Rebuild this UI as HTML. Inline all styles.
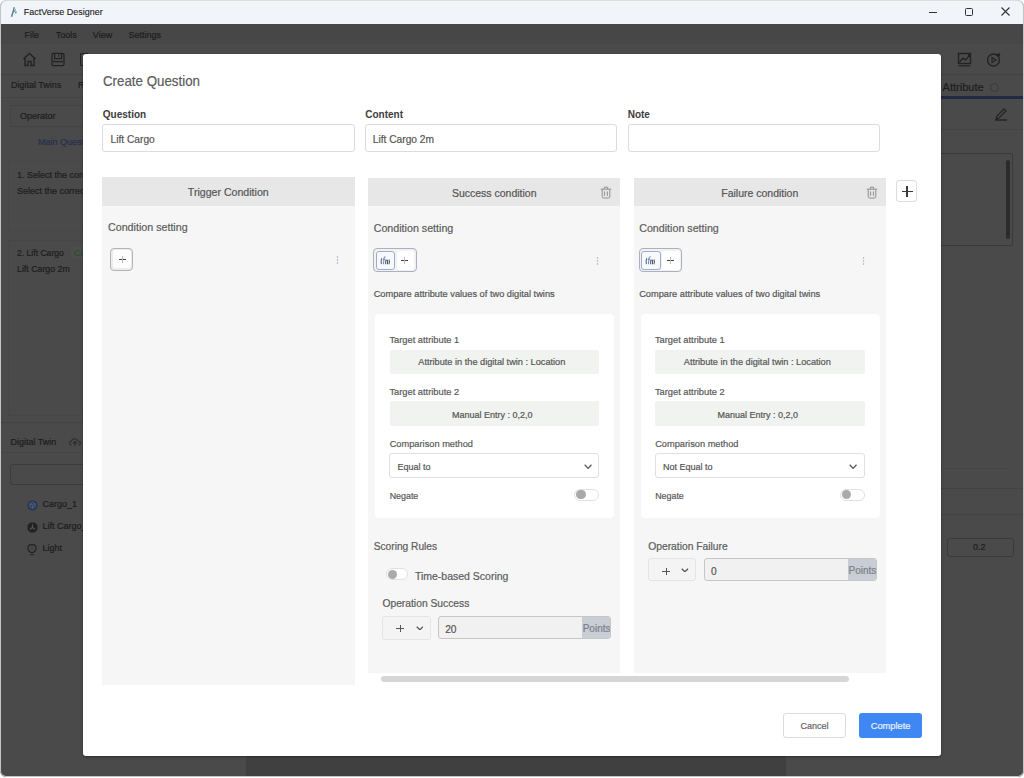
<!DOCTYPE html>
<html><head><meta charset="utf-8">
<style>
*{box-sizing:border-box;margin:0;padding:0}
html,body{width:1024px;height:778px;overflow:hidden;background:#ffffff;font-family:"Liberation Sans",sans-serif}
.a{position:absolute}
.t{position:absolute;white-space:nowrap;line-height:1;-webkit-text-stroke:0.2px currentColor}
#win{position:absolute;left:0;top:0;width:1024px;height:777px;background:#4a4a4a;border-radius:7px 7px 6px 6px;overflow:hidden}
#wborder{position:absolute;left:0;top:0;width:1024px;height:777px;border:1px solid #c4c4c4;border-top-color:#dedede;border-radius:7px 7px 6px 6px;pointer-events:none}
#title{position:absolute;left:0;top:0;width:1024px;height:24px;background:#f1f4f9}
.dk{color:#1d1d1d}
.ln{position:absolute;height:1px;background:#434343}
#dlg{position:absolute;left:83px;top:54px;width:858px;height:702px;background:#fff;border-radius:3px;box-shadow:0 1px 3px rgba(0,0,0,.35)}
.lbl{position:absolute;font-weight:bold;font-size:10px;color:#3c3c3c;white-space:nowrap;line-height:1}
.inp{position:absolute;height:28px;border:1px solid #dcdcdc;border-radius:3px;background:#fff}
.col{position:absolute;width:252.5px;background:#f6f6f6}
.hdr{position:absolute;left:0;top:0;width:100%;height:28px;background:#e7e7e7}
.g{color:#5c5c5c}
.card{position:absolute;left:7px;top:135.5px;width:239px;height:204px;background:#fff;border-radius:4px}
.abox{position:absolute;left:21.5px;width:210px;background:#f1f3f0;border-radius:2px;text-align:center}
.sel{position:absolute;border:1px solid #dadada;border-radius:3px;background:#fff}
.tog{position:absolute;border:1px solid #dedede;border-radius:7px;background:#fff}
.knob{position:absolute;border-radius:50%;background:#a9a9a9}
.ps{position:absolute;border:1px solid #e3e3e3;border-radius:3px;background:#f5f5f5}
.pin{position:absolute;border:1px solid #c9c9c9;border-radius:3px;background:#f1f1f1;overflow:hidden}
.padd{position:absolute;right:0;top:0;height:100%;background:#c9ced6;overflow:hidden}
</style></head><body>
<div id="win">
  <div id="title">
    <svg class="a" style="left:9px;top:6px" width="10" height="12" viewBox="0 0 10 12"><path d="M4.2 1.5 L5.8 1.2 L6.4 3.5 L8 7 L6.5 7.5 L5.2 5 L3.2 11 L1.8 10.6 L3.8 4.5 Z" fill="#557b8a"/><path d="M5 2.2 L6 4.5 L7.3 6.6" stroke="#bfeaf5" stroke-width="0.9" fill="none"/></svg>
    <div class="t" style="left:23.8px;top:8.4px;font-size:9px;color:#1a1a1a;-webkit-text-stroke:0.1px #1a1a1a">FactVerse Designer</div>
    <div class="a" style="left:929.2px;top:11.7px;width:8.2px;height:1.1px;background:#333"></div>
    <div class="a" style="left:964.8px;top:8px;width:8px;height:7.8px;border:1.1px solid #333;border-radius:1.5px"></div>
    <svg class="a" style="left:1000.5px;top:7.4px" width="9" height="9" viewBox="0 0 9 9"><path d="M0.5 0.5 L8.5 8.5 M8.5 0.5 L0.5 8.5" stroke="#333" stroke-width="1.1"/></svg>
  </div>
  <!-- menu bar -->
  <div class="a" style="left:0;top:24px;width:1024px;height:20px;background:#474747"></div>
  <div class="t dk" style="left:24.4px;top:30.5px;font-size:9px">File</div>
  <div class="t dk" style="left:55.7px;top:30.5px;font-size:9px">Tools</div>
  <div class="t dk" style="left:92.8px;top:30.5px;font-size:9px">View</div>
  <div class="t dk" style="left:128.5px;top:30.5px;font-size:9px">Settings</div>
  <!-- toolbar icons -->
  <svg class="a" style="left:22px;top:52px" width="15" height="15" viewBox="0 0 15 15"><path d="M1.5 7 L7.5 1.5 L13.5 7 M3 6 V13.5 H6 V9.5 H9 V13.5 H12 V6" stroke="#232323" stroke-width="1.4" fill="none"/></svg>
  <svg class="a" style="left:51px;top:52px" width="14" height="15" viewBox="0 0 14 15"><rect x="1" y="1.3" width="12" height="12.4" rx="1.5" stroke="#222" stroke-width="1.3" fill="none"/><path d="M3.6 1.3 V6.6 H10.6 V1.3 M7.8 2.6 V4.6 M2 9.6 H12" stroke="#222" stroke-width="1.2" fill="none"/></svg>
  <div class="a" style="left:80px;top:52.8px;width:8px;height:13px;border:1.3px solid #232323;border-right:none;border-radius:2px 0 0 2px"></div>
  <svg class="a" style="left:957px;top:52px" width="16" height="15" viewBox="0 0 16 15"><rect x="1.5" y="1.5" width="12" height="10" stroke="#232323" stroke-width="1.4" fill="none"/><path d="M2.5 10 L6 6 L8.5 8 L12.5 3.5 M11 3 H13 V5" stroke="#232323" stroke-width="1.3" fill="none"/><path d="M1.5 13.8 H13.5" stroke="#232323" stroke-width="1.2"/></svg>
  <svg class="a" style="left:986px;top:52px" width="16" height="15" viewBox="0 0 16 15"><circle cx="7.5" cy="8" r="6" stroke="#232323" stroke-width="1.4" fill="none"/><path d="M6 5.5 L10 8 L6 10.5 Z" stroke="#232323" stroke-width="1.2" fill="none"/><circle cx="12.5" cy="3" r="1.8" fill="#232323"/></svg>
  <div class="ln" style="left:0;top:74px;width:1024px;background:#424242"></div>
  <!-- tab row -->
  <div class="t dk" style="left:11px;top:81.3px;font-size:9px">Digital Twins</div>
  <div class="t dk" style="left:78px;top:81.3px;font-size:9px">R</div>
  <div class="t dk" style="left:942.6px;top:81.7px;font-size:11px">Attribute</div>
  <div class="a" style="left:990px;top:82.5px;width:9px;height:9px;border:1px solid #3a3a3a;border-radius:50%"></div>
  <div class="ln" style="left:0;top:97px;width:1024px;background:#444"></div>
  <div class="a" style="left:941px;top:96px;width:83px;height:2.6px;background:#1f2b40"></div>
  <!-- left panel -->
  <div class="a" style="left:10px;top:105px;width:100px;height:22px;border:1px solid #434343;border-radius:2px"></div>
  <div class="t dk" style="left:20px;top:112.2px;font-size:9px">Operator</div>
  <div class="t" style="left:38px;top:137.7px;font-size:9px;color:#263050">Main Quest</div>
  <div class="a" style="left:8px;top:161px;width:100px;height:70px;border:1px solid #474747;border-right:none"></div>
  <div class="t dk" style="left:17px;top:170.7px;font-size:9px">1. Select the correct</div>
  <div class="t dk" style="left:17px;top:187.4px;font-size:9px">Select the correct</div>
  <div class="a" style="left:8px;top:240px;width:100px;height:176px;border:1px solid #474747;border-right:none"></div>
  <div class="t dk" style="left:17px;top:248.7px;font-size:8.6px">2. Lift Cargo</div>
  <div class="a" style="left:71px;top:247px;width:14px;height:11px;background:#4a4f4a"></div>
  <div class="t" style="left:74px;top:248.7px;font-size:9px;color:#324a36">Cu</div>
  <div class="t dk" style="left:17px;top:264.7px;font-size:8.8px">Lift Cargo 2m</div>
  <div class="ln" style="left:0;top:422px;width:100px;background:#424242"></div>
  <div class="t dk" style="left:10.4px;top:437.7px;font-size:9px">Digital Twin</div>
  <svg class="a" style="left:68px;top:436px" width="14" height="11" viewBox="0 0 14 11"><path d="M3.5 9 C1 9,1 5,3.5 5 C4 2,9 2,10 5 C13 5,13 9,10.5 9 M7 10 V5.5 M5 7.5 L7 5.5 L9 7.5" stroke="#2d2d2d" stroke-width="1.1" fill="none"/></svg>
  <div class="ln" style="left:0;top:452px;width:100px;background:#454545"></div>
  <div class="a" style="left:10px;top:463.5px;width:100px;height:21px;border:1px solid #3c3c3c;border-radius:3px"></div>
  <svg class="a" style="left:26.5px;top:499.8px" width="11" height="11" viewBox="0 0 11 11"><circle cx="5.5" cy="5.5" r="5.2" fill="#2d3a55"/><path d="M5.5 2.5 L8 3.8 V6.8 L5.5 8.2 L3 6.8 V3.8 Z M3 3.8 L5.5 5.2 L8 3.8 M5.5 5.2 V8.2" stroke="#56678a" stroke-width="0.8" fill="none"/></svg>
  <div class="t dk" style="left:42.4px;top:499.8px;font-size:9px">Cargo_1</div>
  <svg class="a" style="left:26.5px;top:521.8px" width="11" height="11" viewBox="0 0 11 11"><path d="M3.2 0.6 H7.8 L10.4 3.2 V7.8 L7.8 10.4 H3.2 L0.6 7.8 V3.2 Z" fill="#222"/><path d="M5.5 2.6 V5.5 M5.5 5.5 L3 7.2 M5.5 5.5 L8 7.2" stroke="#555" stroke-width="1.1"/></svg>
  <div class="t dk" style="left:42.4px;top:522.1px;font-size:9px">Lift Cargo_</div>
  <svg class="a" style="left:27.2px;top:543.5px" width="10" height="12" viewBox="0 0 10 12"><path d="M3.3 8.3 C1.8 7.3,0.9 6,0.9 4.5 C0.9 2.2,2.8 0.7,5 0.7 C7.2 0.7,9.1 2.2,9.1 4.5 C9.1 6,8.2 7.3,6.7 8.3 Z M3.5 10.6 H6.5" stroke="#222" stroke-width="1.2" fill="none"/><circle cx="5" cy="4.4" r="1.4" stroke="#3a3a3a" stroke-width="0.8" fill="none"/></svg>
  <div class="t dk" style="left:42.4px;top:544.1px;font-size:9px">Light</div>
  <!-- right panel -->
  <div class="ln" style="left:941px;top:129px;width:83px;background:#444"></div>
  <svg class="a" style="left:994px;top:107px" width="14" height="14" viewBox="0 0 14 14"><path d="M2 12 L3 9 L10 2 L12 4 L5 11 Z M1 13 H13" stroke="#242424" stroke-width="1.3" fill="none"/></svg>
  <div class="a" style="left:935px;top:152.5px;width:78px;height:93px;border:1px solid #3a3a3a;border-radius:2px"></div>
  <div class="a" style="left:1005.5px;top:160px;width:4.5px;height:79px;background:#2c2c2c;border-radius:2px"></div>
  <div class="ln" style="left:941px;top:467.5px;width:70px;background:#454545"></div>
  <div class="ln" style="left:941px;top:488px;width:83px;background:#434343"></div>
  <div class="ln" style="left:941px;top:514px;width:83px;background:#434343"></div>
  <div class="a" style="left:947px;top:538px;width:67px;height:18.5px;border:1px solid #3a3a3a;border-radius:3px"></div>
  <div class="t dk" style="left:973px;top:542.7px;font-size:9px">0.2</div>
  <!-- viewport bottom -->
  <div class="a" style="left:246px;top:740px;width:540px;height:40px;background:#404040"></div>
</div>
<div id="wborder"></div>

<div id="dlg"></div>
<div class="t" style="left:102.6px;top:72.5px;font-size:15px;color:#5a5a5a;transform:scaleX(0.888);transform-origin:0 0">Create Question</div>
<div class="lbl" style="left:102.8px;top:109.5px">Question</div>
<div class="lbl" style="left:365.2px;top:109.5px">Content</div>
<div class="lbl" style="left:627.7px;top:109.5px">Note</div>
<div class="a" style="left:102px;top:124px;width:252.5px;height:28px;border:1px solid #dcdcdc;border-radius:3px;background:#fff"></div>
<div class="a" style="left:364.5px;top:124px;width:252.5px;height:28px;border:1px solid #dcdcdc;border-radius:3px;background:#fff"></div>
<div class="a" style="left:627.5px;top:124px;width:252.5px;height:28px;border:1px solid #dcdcdc;border-radius:3px;background:#fff"></div>
<div class="t" style="left:110.6px;top:134.9px;font-size:10.2px;color:#555;">Lift Cargo</div>
<div class="t" style="left:372.8px;top:134.9px;font-size:10.2px;color:#555;">Lift Cargo 2m</div>
<div class="a" style="left:102px;top:177px;width:252.5px;height:507.5px;background:#f6f6f6"></div>
<div class="a" style="left:102px;top:177px;width:252.5px;height:28.5px;background:#e7e7e7"></div>
<div class="t" style="left:78.25px;width:300px;text-align:center;top:187.0px;font-size:10.6px;color:#555;">Trigger Condition</div>
<div class="t" style="left:108px;top:222.1px;font-size:10.7px;color:#5c5c5c;">Condition setting</div>
<div class="a" style="left:110.3px;top:247.5px;width:23.2px;height:23.3px;border:1.6px solid #b4b4b4;border-radius:4px;background:#ececec"></div>
<div class="a" style="left:113px;top:250.2px;width:17.8px;height:17.9px;background:#fdfdfd;border-radius:2px"></div>
<div class="a" style="left:118.5px;top:259px;width:7px;height:1px;background:#444"></div>
<div class="a" style="left:121.5px;top:256px;width:1px;height:7px;background:#bbb"></div>
<svg class="a" style="left:335.8px;top:255.6px" width="3" height="9" viewBox="0 0 3 9"><circle cx="1.5" cy="1" r="0.75" fill="#98a6c8"/><circle cx="1.5" cy="4" r="0.75" fill="#98a6c8"/><circle cx="1.5" cy="7" r="0.75" fill="#98a6c8"/></svg>
<div class="a" style="left:368px;top:178px;width:252.3px;height:494.5px;background:#f6f6f6"></div>
<div class="a" style="left:368px;top:178px;width:252.3px;height:28px;background:#e7e7e7"></div>
<div class="t" style="left:344.25px;width:300px;text-align:center;top:188.2px;font-size:10.5px;color:#555;">Success condition</div>
<svg class="a" style="left:600.3px;top:185.5px" width="12" height="13" viewBox="0 0 12 13"><path d="M0.8 3.2 H11.2 M4.3 3 V1.2 H7.7 V3 M2.2 3.4 V10.8 Q2.2 12 3.4 12 H8.6 Q9.8 12 9.8 10.8 V3.4 M4.6 5.4 V9.8 M7.4 5.4 V9.8" stroke="#8f8f8f" stroke-width="1" fill="none"/></svg>
<div class="t" style="left:373.7px;top:223.3px;font-size:10.7px;color:#5c5c5c;">Condition setting</div>
<div class="a" style="left:373.3px;top:248px;width:43.5px;height:24px;border:1.5px solid #a9b0c0;border-radius:4px;background:#f2f2f2"></div>
<div class="a" style="left:375.6px;top:250.5px;width:19.5px;height:19px;border:1.5px solid #9eabc9;border-radius:3px;background:#f7f9ff"></div>
<div class="a" style="left:396.8px;top:250.5px;width:17.5px;height:19px;background:#fff;border-radius:2px"></div>
<svg class="a" style="left:379.7px;top:255.6px" width="11" height="9" viewBox="0 0 11 9"><path d="M1.8 2.2 Q0.6 5 1.4 8.2" stroke="#606878" stroke-width="1.1" fill="none"/><path d="M5.6 0.8 Q4.3 0.6 4 2.4 L3.4 8.2 M2.8 3.3 H5.4" stroke="#6f8fc8" stroke-width="1.1" fill="none"/><path d="M5.8 4 L5.6 8.2 M5.9 4.6 Q7 3.3 7.6 4.6 L7.4 8.2 M9 3.6 Q10 5.8 8.8 8.2" stroke="#585f6c" stroke-width="1.1" fill="none"/></svg>
<div class="a" style="left:401.3px;top:260px;width:7px;height:1px;background:#444"></div>
<div class="a" style="left:404.3px;top:257px;width:1px;height:7px;background:#bbb"></div>
<svg class="a" style="left:596.0px;top:256.5px" width="3" height="9" viewBox="0 0 3 9"><circle cx="1.5" cy="1" r="0.75" fill="#98a6c8"/><circle cx="1.5" cy="4" r="0.75" fill="#98a6c8"/><circle cx="1.5" cy="7" r="0.75" fill="#98a6c8"/></svg>
<div class="t" style="left:373.7px;top:290.1px;font-size:9.25px;color:#555;">Compare attribute values of two digital twins</div>
<div class="a" style="left:375px;top:313.5px;width:239.2px;height:204.3px;background:#fff;border-radius:4px"></div>
<div class="t" style="left:389.4px;top:335.7px;font-size:9.3px;color:#585858;">Target attribute 1</div>
<div class="a" style="left:389.5px;top:350px;width:209.8px;height:23.5px;background:#f1f3f0;border-radius:2px"></div>
<div class="t" style="left:341.8px;width:300px;text-align:center;top:358.2px;font-size:9.2px;color:#555;">Attribute in the digital twin : Location</div>
<div class="t" style="left:389.4px;top:388.0px;font-size:9.3px;color:#585858;">Target attribute 2</div>
<div class="a" style="left:389.5px;top:401px;width:209.8px;height:25px;background:#f1f3f0;border-radius:2px"></div>
<div class="t" style="left:342.2px;width:300px;text-align:center;top:411px;font-size:9px;color:#555;">Manual Entry : 0,2,0</div>
<div class="t" style="left:389.7px;top:439.9px;font-size:9.25px;color:#5a5a5a;">Comparison method</div>
<div class="a" style="left:389.3px;top:453.3px;width:209.8px;height:25px;border:1px solid #e0e0e0;border-radius:3px;background:#fff"></div>
<div class="t" style="left:397.4px;top:463px;font-size:9px;color:#555;">Equal to</div>
<svg class="a" style="left:583.5px;top:463.7px" width="8.2" height="5.2" viewBox="0 0 8.2 5.2"><path d="M0.7 0.7 L4.1 4.4 L7.499999999999999 0.7" stroke="#5a5a5a" stroke-width="1.3" fill="none"/></svg>
<div class="t" style="left:389.7px;top:491.8px;font-size:8.9px;color:#5a5a5a;">Negate</div>
<div class="a" style="left:574.3px;top:488.6px;width:25.2px;height:12.1px;border:1px solid #e0e0e0;border-radius:7px;background:#fff"></div>
<div class="a" style="left:576.4px;top:489.95000000000005px;width:9.4px;height:9.4px;border-radius:50%;background:#aaaaaa"></div>
<div class="a" style="left:633.5px;top:178px;width:252.3px;height:494.5px;background:#f6f6f6"></div>
<div class="a" style="left:633.5px;top:178px;width:252.3px;height:28px;background:#e7e7e7"></div>
<div class="t" style="left:609.75px;width:300px;text-align:center;top:188.2px;font-size:10.5px;color:#555;">Failure condition</div>
<svg class="a" style="left:865.8px;top:185.5px" width="12" height="13" viewBox="0 0 12 13"><path d="M0.8 3.2 H11.2 M4.3 3 V1.2 H7.7 V3 M2.2 3.4 V10.8 Q2.2 12 3.4 12 H8.6 Q9.8 12 9.8 10.8 V3.4 M4.6 5.4 V9.8 M7.4 5.4 V9.8" stroke="#8f8f8f" stroke-width="1" fill="none"/></svg>
<div class="t" style="left:639.2px;top:223.3px;font-size:10.7px;color:#5c5c5c;">Condition setting</div>
<div class="a" style="left:638.8px;top:248px;width:43.5px;height:24px;border:1.5px solid #a9b0c0;border-radius:4px;background:#f2f2f2"></div>
<div class="a" style="left:641.0999999999999px;top:250.5px;width:19.5px;height:19px;border:1.5px solid #9eabc9;border-radius:3px;background:#f7f9ff"></div>
<div class="a" style="left:662.3px;top:250.5px;width:17.5px;height:19px;background:#fff;border-radius:2px"></div>
<svg class="a" style="left:645.1999999999999px;top:255.6px" width="11" height="9" viewBox="0 0 11 9"><path d="M1.8 2.2 Q0.6 5 1.4 8.2" stroke="#606878" stroke-width="1.1" fill="none"/><path d="M5.6 0.8 Q4.3 0.6 4 2.4 L3.4 8.2 M2.8 3.3 H5.4" stroke="#6f8fc8" stroke-width="1.1" fill="none"/><path d="M5.8 4 L5.6 8.2 M5.9 4.6 Q7 3.3 7.6 4.6 L7.4 8.2 M9 3.6 Q10 5.8 8.8 8.2" stroke="#585f6c" stroke-width="1.1" fill="none"/></svg>
<div class="a" style="left:666.8px;top:260px;width:7px;height:1px;background:#444"></div>
<div class="a" style="left:669.8px;top:257px;width:1px;height:7px;background:#bbb"></div>
<svg class="a" style="left:861.5px;top:256.5px" width="3" height="9" viewBox="0 0 3 9"><circle cx="1.5" cy="1" r="0.75" fill="#98a6c8"/><circle cx="1.5" cy="4" r="0.75" fill="#98a6c8"/><circle cx="1.5" cy="7" r="0.75" fill="#98a6c8"/></svg>
<div class="t" style="left:639.2px;top:290.1px;font-size:9.25px;color:#555;">Compare attribute values of two digital twins</div>
<div class="a" style="left:640.5px;top:313.5px;width:239.2px;height:204.3px;background:#fff;border-radius:4px"></div>
<div class="t" style="left:654.9px;top:335.7px;font-size:9.3px;color:#585858;">Target attribute 1</div>
<div class="a" style="left:655.0px;top:350px;width:209.8px;height:23.5px;background:#f1f3f0;border-radius:2px"></div>
<div class="t" style="left:607.3px;width:300px;text-align:center;top:358.2px;font-size:9.2px;color:#555;">Attribute in the digital twin : Location</div>
<div class="t" style="left:654.9px;top:388.0px;font-size:9.3px;color:#585858;">Target attribute 2</div>
<div class="a" style="left:655.0px;top:401px;width:209.8px;height:25px;background:#f1f3f0;border-radius:2px"></div>
<div class="t" style="left:607.7px;width:300px;text-align:center;top:411px;font-size:9px;color:#555;">Manual Entry : 0,2,0</div>
<div class="t" style="left:655.2px;top:439.9px;font-size:9.25px;color:#5a5a5a;">Comparison method</div>
<div class="a" style="left:654.8px;top:453.3px;width:209.8px;height:25px;border:1px solid #e0e0e0;border-radius:3px;background:#fff"></div>
<div class="t" style="left:662.9px;top:463px;font-size:9px;color:#555;">Not Equal to</div>
<svg class="a" style="left:849.0px;top:463.7px" width="8.2" height="5.2" viewBox="0 0 8.2 5.2"><path d="M0.7 0.7 L4.1 4.4 L7.499999999999999 0.7" stroke="#5a5a5a" stroke-width="1.3" fill="none"/></svg>
<div class="t" style="left:655.2px;top:491.8px;font-size:8.9px;color:#5a5a5a;">Negate</div>
<div class="a" style="left:839.8px;top:488.6px;width:25.2px;height:12.1px;border:1px solid #e0e0e0;border-radius:7px;background:#fff"></div>
<div class="a" style="left:841.9px;top:489.95000000000005px;width:9.4px;height:9.4px;border-radius:50%;background:#aaaaaa"></div>
<div class="t" style="left:373.7px;top:541.9px;font-size:10.2px;color:#5c5c5c;">Scoring Rules</div>
<div class="a" style="left:385.8px;top:568.4px;width:22px;height:11.4px;border:1px solid #e0e0e0;border-radius:7px;background:#fff"></div>
<div class="a" style="left:387.5px;top:569.5px;width:9.2px;height:9.2px;border-radius:50%;background:#aaaaaa"></div>
<div class="t" style="left:414.9px;top:570.6px;font-size:10.5px;color:#5c5c5c;">Time-based Scoring</div>
<div class="t" style="left:382.4px;top:599px;font-size:10.3px;color:#5c5c5c;">Operation Success</div>
<div class="a" style="left:382.3px;top:616.4px;width:48.3px;height:23.2px;border:1px solid #e4e4e4;border-radius:3px;background:#f4f4f4"></div>
<div class="a" style="left:396.4px;top:627.8px;width:7.8px;height:1.2px;background:#555"></div>
<div class="a" style="left:399.59999999999997px;top:624.8px;width:1.2px;height:7.4px;background:#555"></div>
<svg class="a" style="left:415.5px;top:625.8px" width="7.8" height="4.6" viewBox="0 0 7.8 4.6"><path d="M0.7 0.7 L3.9 3.8 L7.1 0.7" stroke="#555" stroke-width="1.2" fill="none"/></svg>
<div class="a" style="left:437.8px;top:616px;width:173.2px;height:23.2px;border:1px solid #c6c6c6;border-radius:3px;background:#f1f1f1;overflow:hidden"><div class="a" style="right:0;top:0;width:27.5px;height:100%;background:#c8cdd6"></div><div class="t" style="right:-0.5px;top:7px;font-size:10px;color:#7d7f85">Points</div></div>
<div class="t" style="left:445.2px;top:625px;font-size:10.2px;color:#555;">20</div>
<div class="t" style="left:648.2px;top:541.5px;font-size:10.3px;color:#5c5c5c;">Operation Failure</div>
<div class="a" style="left:648.1px;top:558.3px;width:48.3px;height:23.2px;border:1px solid #e4e4e4;border-radius:3px;background:#f4f4f4"></div>
<div class="a" style="left:662.4000000000001px;top:570.5px;width:7.8px;height:1.2px;background:#555"></div>
<div class="a" style="left:665.6px;top:567.5px;width:1.2px;height:7.4px;background:#555"></div>
<svg class="a" style="left:681.3px;top:567.6999999999999px" width="7.8" height="4.6" viewBox="0 0 7.8 4.6"><path d="M0.7 0.7 L3.9 3.8 L7.1 0.7" stroke="#555" stroke-width="1.2" fill="none"/></svg>
<div class="a" style="left:703.6px;top:557.9px;width:173.2px;height:23.2px;border:1px solid #c6c6c6;border-radius:3px;background:#f1f1f1;overflow:hidden"><div class="a" style="right:0;top:0;width:27.5px;height:100%;background:#c8cdd6"></div><div class="t" style="right:-0.5px;top:7px;font-size:10px;color:#7d7f85">Points</div></div>
<div class="t" style="left:711.0px;top:566.9px;font-size:10.2px;color:#555;">0</div>
<div class="a" style="left:896.3px;top:180.3px;width:21.2px;height:21.4px;border:1px solid #dcdcdc;border-radius:3px;background:#fff"></div>
<div class="a" style="left:901.5px;top:190.6px;width:11px;height:1.3px;background:#3a3a3a"></div>
<div class="a" style="left:906.35px;top:185.7px;width:1.3px;height:11px;background:#3a3a3a"></div>
<div class="a" style="left:381.2px;top:676.2px;width:468.1px;height:5.4px;background:#d6d6d6;border-radius:3px"></div>
<div class="a" style="left:783.3px;top:713.3px;width:62.6px;height:24.6px;border:1px solid #dcdcdc;border-radius:3px;background:#fff"></div>
<div class="t" style="left:664.6px;width:300px;text-align:center;top:722.2px;font-size:9px;color:#666;">Cancel</div>
<div class="a" style="left:859.2px;top:713.3px;width:62.8px;height:24.6px;background:#3f87f2;border-radius:3px"></div>
<div class="t" style="left:740.6px;width:300px;text-align:center;top:722.0px;font-size:9.3px;color:#eaf2ff;">Complete</div>

</body></html>
